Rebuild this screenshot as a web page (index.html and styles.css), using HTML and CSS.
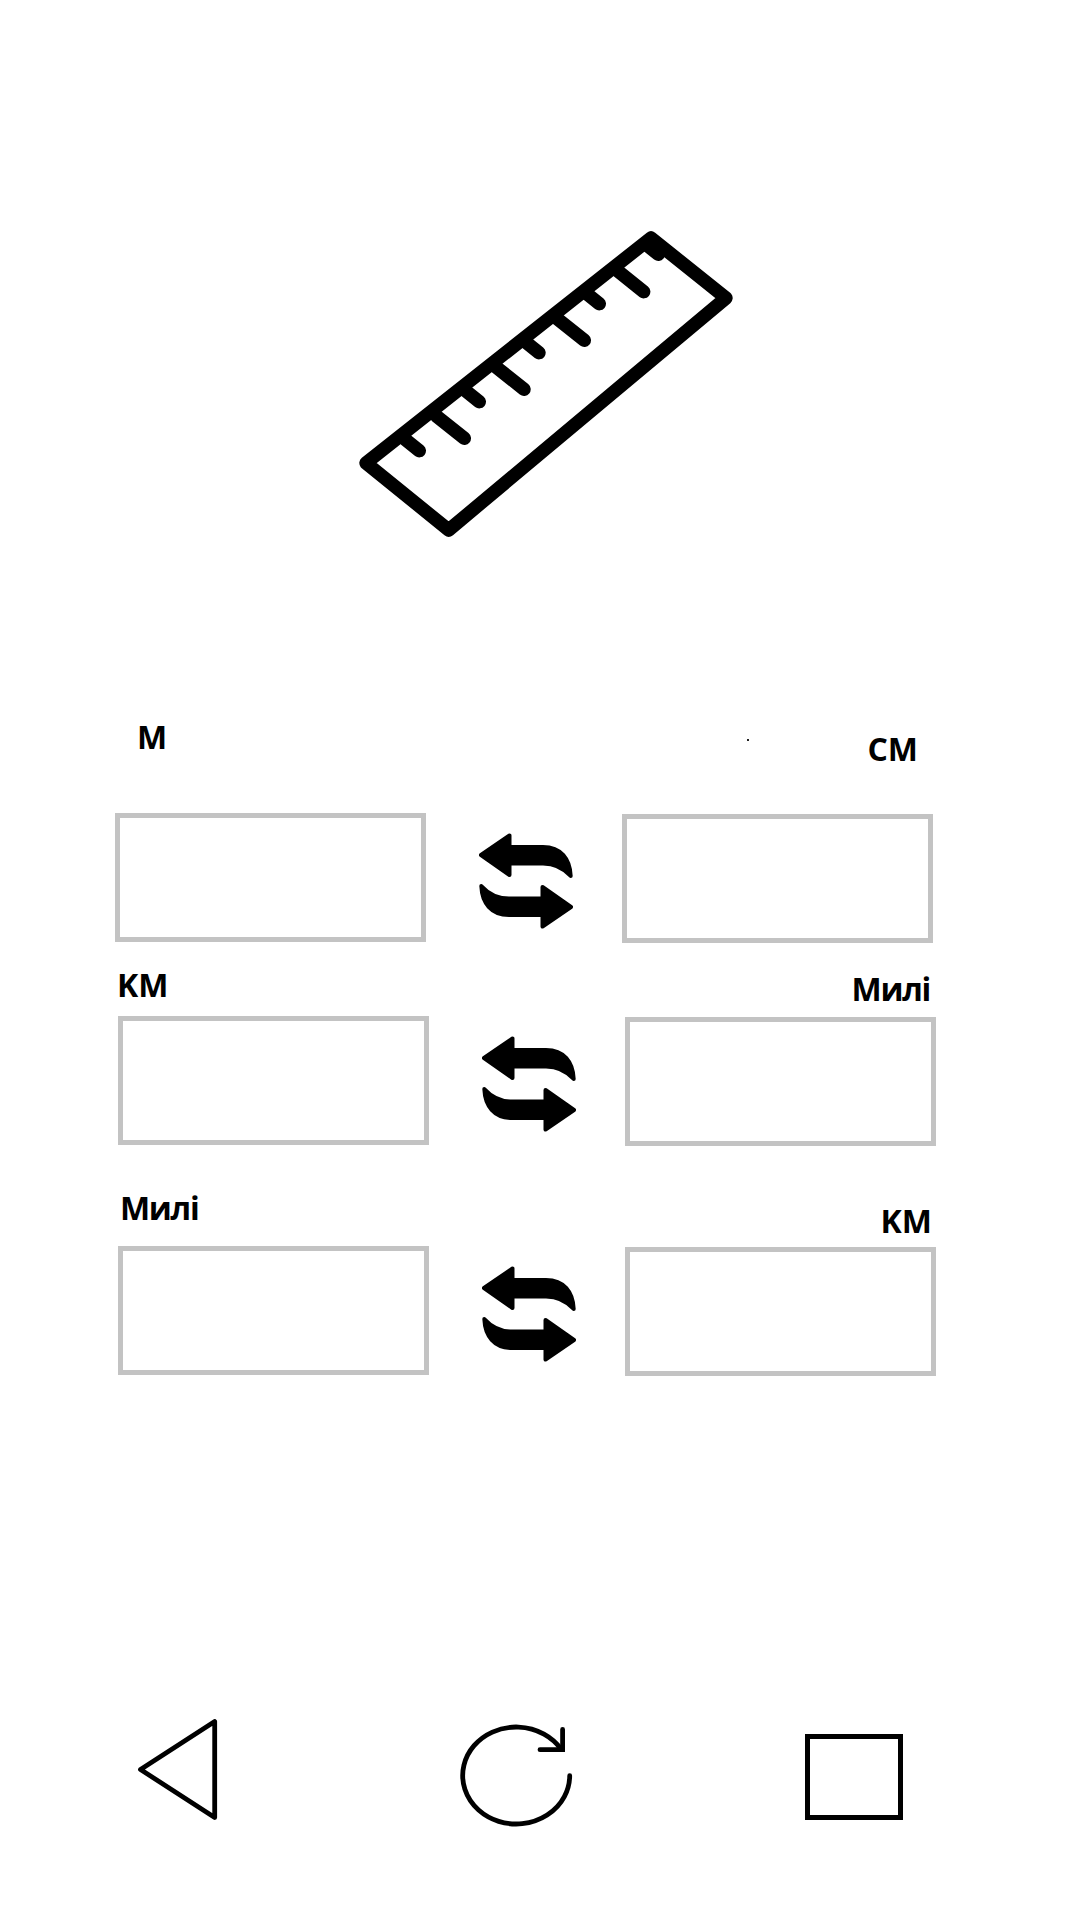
FILE: index.html
```html
<!DOCTYPE html>
<html lang="uk">
<head>
<meta charset="utf-8">
<title>Конвертер довжини</title>
<link rel="stylesheet" href="styles.css">
</head>
<body>
<svg class="symbols" aria-hidden="true">
  <symbol id="swap" viewBox="0 0 94 96">
    <g id="swap-arrow">
      <path d="M2 22 30.500 2.500V14H64C82 14 91 26 91.700 43C84 34.500 76 30.500 64 30.500H30.500V42Z" fill="#000" stroke="#000" stroke-width="4" stroke-linejoin="round"/>
    </g>
    <use href="#swap-arrow" transform="rotate(180 47 48)"/>
  </symbol>
</svg>
<main class="screen">
  <header class="hero">
    <svg class="ruler" viewBox="0 0 376 308" fill="none" stroke="#000" stroke-width="13.400" stroke-linecap="round" stroke-linejoin="round">
      <path d="M7 233 89.700 300 367 68 292 8Z"/>
      <path d="M60.300 220.700l-14-11.200M105.300 208.300l-28-22.400M120.300 171.700l-14-11.200M165 159.300l-28-22.400M180 122.700l-14-11.200M225.300 110.300l-28-22.400M240.300 73.700l-14-11.200M284.700 61.700l-28-22.400M299.300 24.300l-10-8"/>
    </svg>
  </header>
  <section class="converter">
    <div class="row row-first">
      <label class="field"><span class="unit">M</span><input class="box" type="text"></label>
      <svg class="swap"><use href="#swap"/></svg>
      <label class="field field-end"><span class="unit">CM</span><input class="box" type="text"></label>
      <i class="speck"></i>
    </div>
    <div class="row row-second">
      <label class="field"><span class="unit">KM</span><input class="box" type="text"></label>
      <svg class="swap"><use href="#swap"/></svg>
      <label class="field field-end"><span class="unit miles">Милі</span><input class="box" type="text"></label>
    </div>
    <div class="row row-third">
      <label class="field"><span class="unit miles">Милі</span><input class="box" type="text"></label>
      <svg class="swap"><use href="#swap"/></svg>
      <label class="field field-end"><span class="unit">KM</span><input class="box" type="text"></label>
    </div>
  </section>
  <nav class="navbar">
    <svg class="back" viewBox="0 0 80 102" fill="none" stroke="#000" stroke-width="4.800" stroke-linejoin="round"><path d="M2.500 50.500 76.700 2.500V98.500Z"/></svg>
    <svg class="reload" viewBox="0 0 114 104" fill="none" stroke="#000" stroke-width="4.800" stroke-linecap="round"><path d="M109.700 51.700A53.500 48.500 0 1 1 101 25"/><path d="M102.600 5.500V25.700H80"/></svg>
    <div class="recent"></div>
  </nav>
</main>
</body>
</html>
```
FILE: styles.css
```css
* {
  box-sizing: border-box;
}

body {
  margin: 0;
  background: #fff;
  color: #000;
  font-family: "Open Sans", "Noto Sans", sans-serif;
}

.symbols {
  display: none;
}

.screen {
  display: flex;
  flex-direction: column;
  width: 1080px;
  height: 1920px;
  overflow: hidden;
}

.hero {
  height: 700px;
  padding: 230px 0 0 359px;
}

.ruler {
  display: block;
  width: 376px;
  height: 308px;
}

.converter {
  display: flex;
  flex-direction: column;
}

.row {
  position: relative;
  display: flex;
  align-items: flex-end;
  margin-left: 118px;
}

.row-first {
  height: 243px;
  margin-left: 115px;
}

.row-second {
  height: 203px;
}

.row-third {
  height: 230px;
}

.field {
  display: flex;
  flex-direction: column;
  width: 311px;
  margin-bottom: 1px;
}

.field-end {
  align-items: flex-end;
  margin-bottom: 0;
}

.unit {
  font-size: 32px;
  font-weight: 700;
  line-height: 44px;
}

.miles {
  letter-spacing: -1.3px;
}

.box {
  display: block;
  width: 311px;
  height: 129px;
  border: 5px solid #c3c3c3;
  border-radius: 0;
  padding: 0 16px;
  background: #fff;
  font: inherit;
  font-size: 32px;
  outline: none;
}

.row-first .unit {
  margin: 0 15px 54px 22px;
}

.row-first .field-end .unit {
  margin-bottom: 43px;
}

.row-second .unit {
  margin: 0 6px 9px -1px;
}

.row-second .field-end .unit {
  margin-bottom: 6px;
}

.row-third .unit {
  margin: 0 4px 16px 2px;
}

.row-third .field-end .unit {
  margin-bottom: 4px;
}

.swap {
  width: 94px;
  height: 96px;
  margin: 0 49px 14px 53px;
}

.speck {
  position: absolute;
  left: 632px;
  top: 39px;
  width: 2px;
  height: 2px;
  background: #222;
}

.navbar {
  display: flex;
  align-items: flex-start;
  margin-top: 342px;
  padding-left: 138px;
}

.back {
  width: 80px;
  height: 102px;
  margin-top: 1px;
}

.reload {
  width: 114px;
  height: 104px;
  margin: 6px 0 0 242px;
}

.recent {
  width: 98px;
  height: 86px;
  margin: 16px 0 0 231px;
  border: 5px solid #000;
}
```
